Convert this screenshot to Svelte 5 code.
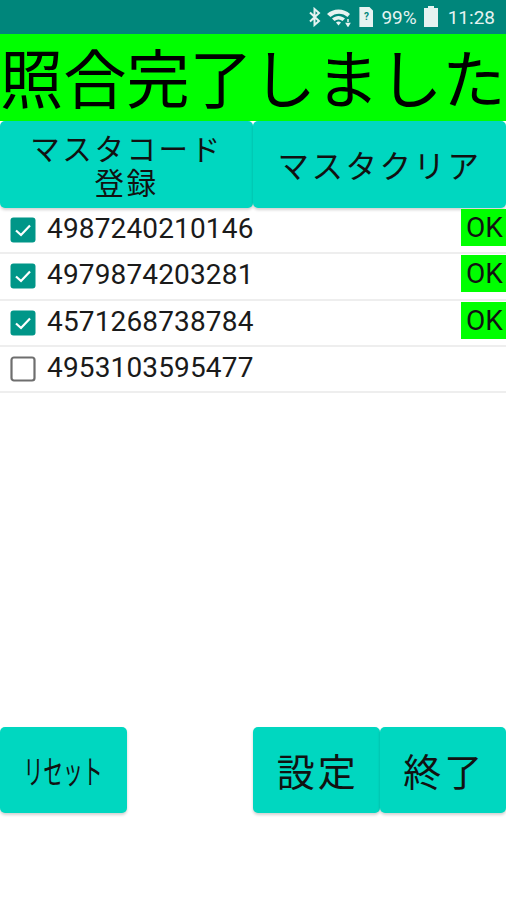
<script>
  const rows = [
    { code: "4987240210146", checked: true },
    { code: "4979874203281", checked: true },
    { code: "4571268738784", checked: true },
    { code: "4953103595477", checked: false },
  ];
</script>

<div class="screen">
  <div class="status">
    <svg class="bt" width="14" height="20" viewBox="0 0 14 20">
      <path d="M2 5.500 11 14 6.500 18V2L11 6 2 14.500" fill="none" stroke="#e6f3f1" stroke-width="2" />
    </svg>
    <svg class="wifi" width="26" height="20" viewBox="0 0 26 20">
      <path d="M1 7C7 1 18 1 24 7L21.500 10C17 5.500 9 5.500 4.500 10Z" fill="#e6f3f1" />
      <path d="M6 11.500C10 8 15 8 19 11.500L16.500 14C14 12 11 12 8.500 14Z" fill="#e6f3f1" />
      <path d="M10 15.500C11.500 14.300 13.500 14.300 15 15.500L12.500 18.500Z" fill="#e6f3f1" />
      <path d="M22 12v3M20.500 16.500 22 19l1.500-2.500Z" stroke="#e6f3f1" stroke-width="1.500" fill="#e6f3f1" />
    </svg>
    <span class="sim">?</span>
    <span class="pct">99%</span>
    <span class="batt"></span>
    <span class="time">11:28</span>
  </div>

  <div class="banner">照合完了しました</div>

  <div class="top-buttons">
    <button class="btn two-line">マスタコード<br />登録</button>
    <button class="btn wide-text">マスタクリア</button>
  </div>

  <div class="list">
    {#each rows as row (row.code)}
      <div class="row">
        {#if row.checked}
          <svg class="check" width="26" height="26" viewBox="0 0 26 26">
            <rect x="0.500" y="0.500" width="25" height="25" rx="3" fill="#009688" />
            <path d="M6 13.500 11 18 20 8.500" fill="none" stroke="#fff" stroke-width="2.200" />
          </svg>
        {:else}
          <svg class="check" width="26" height="26" viewBox="0 0 26 26">
            <rect x="1.500" y="1.500" width="23" height="23" rx="2.500" fill="#fff" stroke="#6e6e6e" stroke-width="2.200" />
          </svg>
        {/if}
        <span class="code">{row.code}</span>
        {#if row.checked}<span class="ok">OK</span>{/if}
      </div>
    {/each}
  </div>

  <div class="bottom-buttons">
    <button class="btn small reset"><span class="narrow">リセット</span></button>
    <div class="spacer"></div>
    <button class="btn small big-text">設定</button>
    <button class="btn small big-text">終了</button>
  </div>
</div>

<style>
  :global(body) {
    margin: 0;
    background: #fff;
  }

  .screen {
    width: 506px;
    height: 900px;
    display: flex;
    flex-direction: column;
    font-family: "Noto Sans CJK JP", Roboto, sans-serif;
    color: #111;
    overflow: hidden;
  }

  .status {
    height: 34px;
    flex-shrink: 0;
    background: #00867b;
    display: flex;
    align-items: center;
    justify-content: flex-end;
    padding-right: 11px;
    color: #e6f3f1;
    font-family: Roboto, sans-serif;
    font-size: 19px;
  }

  .bt {
    margin-right: 4px;
  }

  .wifi {
    margin-right: 7px;
  }

  .sim {
    width: 14px;
    height: 20px;
    background: #e6f3f1;
    color: #00867b;
    font-size: 10px;
    font-weight: 700;
    line-height: 20px;
    text-align: center;
    margin-right: 8px;
    clip-path: polygon(0 0, 72% 0, 100% 20%, 100% 100%, 0 100%);
  }

  .pct {
    margin-right: 7px;
  }

  .batt {
    width: 14px;
    height: 19px;
    background: #e6f3f1;
    margin-right: 10px;
    position: relative;
  }

  .batt::before {
    content: "";
    position: absolute;
    top: -2px;
    left: 4px;
    width: 6px;
    height: 2px;
    background: #e6f3f1;
  }

  .banner {
    height: 87px;
    flex-shrink: 0;
    background: #00ff00;
    color: #000;
    font-size: 63.200px;
    line-height: 83px;
    white-space: nowrap;
  }

  .top-buttons {
    display: flex;
    height: 87px;
    flex-shrink: 0;
  }

  .top-buttons .btn {
    flex: 1;
    font-size: 29.500px;
    letter-spacing: 2.600px;
    line-height: 34px;
    padding-bottom: 2px;
  }

  .top-buttons .wide-text {
    font-size: 31.500px;
    letter-spacing: 2.500px;
  }

  .btn {
    border: none;
    padding: 0;
    margin: 0;
    background: #00d7c0;
    color: #111;
    font-family: inherit;
    border-radius: 5px;
    box-shadow: 0 2px 3px rgba(0, 0, 0, 0.18);
  }

  .list {
    display: flex;
    flex-direction: column;
  }

  .row {
    height: 44.300px;
    border-bottom: 2px solid #eeeeee;
    display: flex;
    align-items: center;
    padding-left: 10px;
  }

  .check {
    flex-shrink: 0;
  }

  .code {
    margin-left: 11px;
    margin-top: -3px;
    font-family: Roboto, sans-serif;
    font-size: 28px;
    letter-spacing: 0.150px;
    color: #1a1a1a;
  }

  .ok {
    margin-left: auto;
    width: 45px;
    height: 37px;
    background: #00ff00;
    color: #111;
    font-family: Roboto, sans-serif;
    font-size: 28px;
    line-height: 37px;
    text-indent: 5px;
    align-self: flex-start;
    margin-top: 1px;
  }

  .bottom-buttons {
    display: flex;
    margin-top: auto;
    margin-bottom: 87px;
  }

  .small {
    width: 126.500px;
    height: 86px;
    flex-shrink: 0;
  }

  .reset {
    display: flex;
    align-items: center;
    justify-content: center;
  }

  .spacer {
    flex: 1;
  }

  .big-text {
    font-size: 38px;
    letter-spacing: 3px;
    padding-left: 3px;
    padding-bottom: 2px;
  }

  .narrow {
    flex-shrink: 0;
    font-size: 33px;
    transform: scaleX(0.6);
    white-space: nowrap;
  }
</style>
